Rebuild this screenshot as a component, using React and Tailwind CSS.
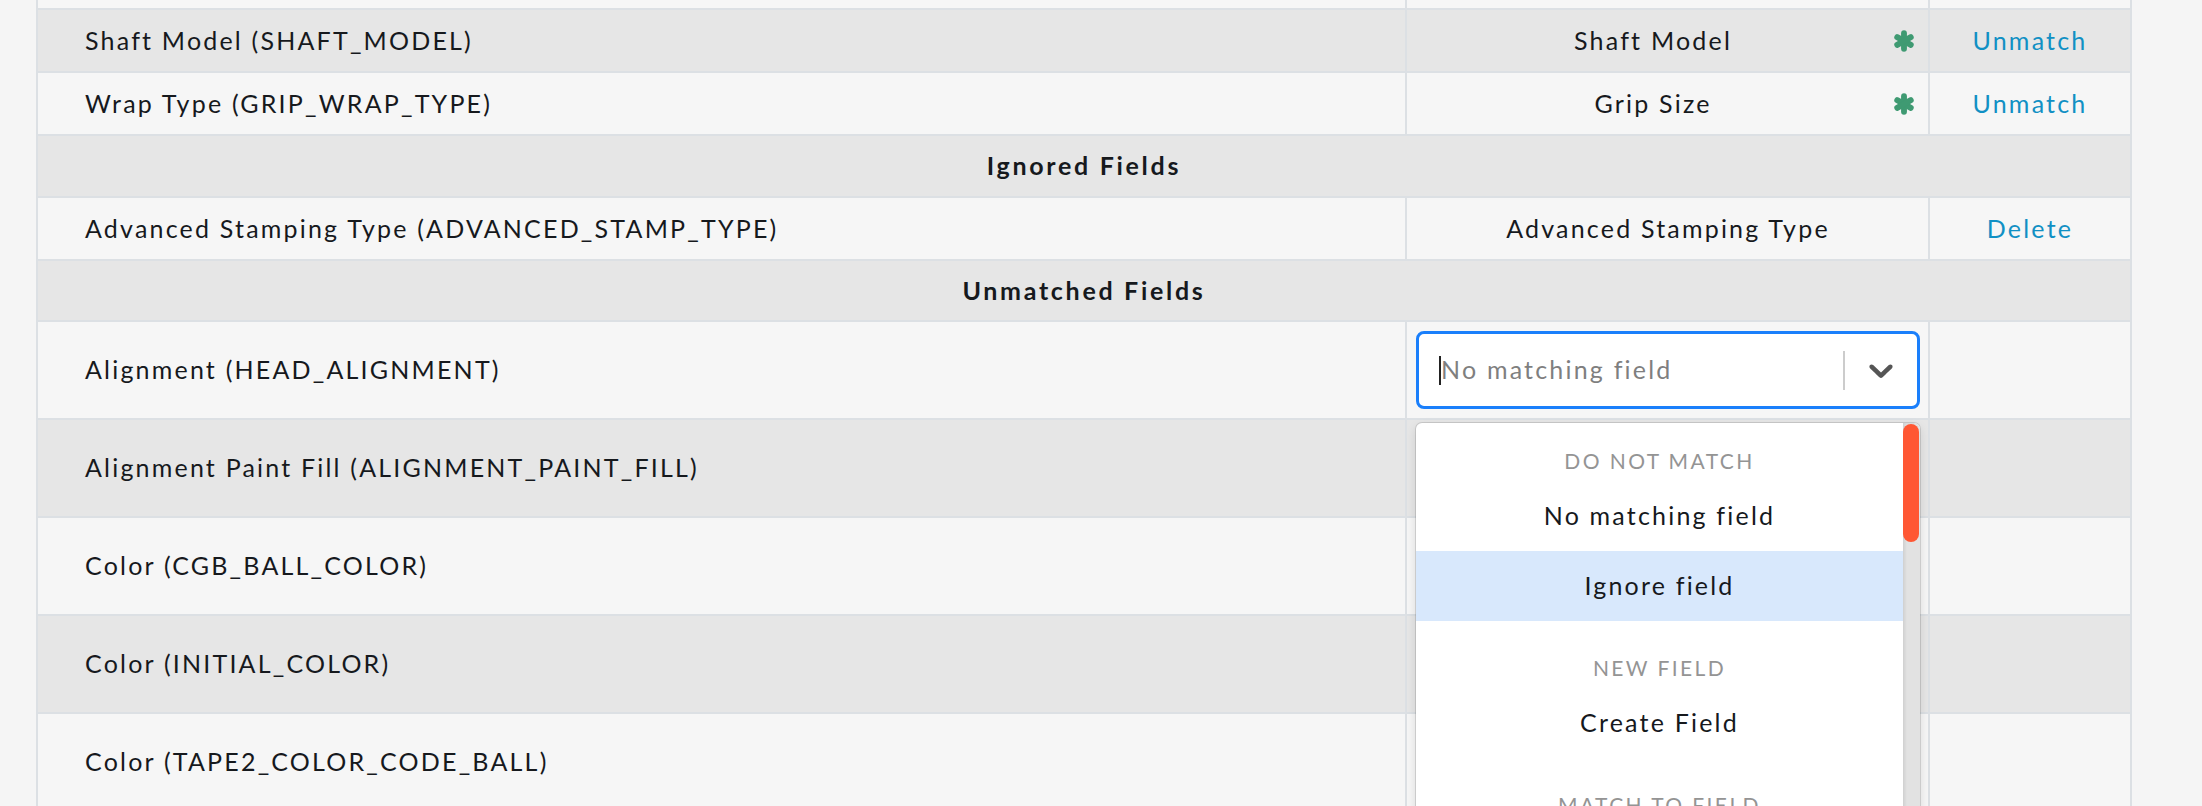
import React from "react";

const rows = [
  { kind: "field", name: "Shaft Model (SHAFT_MODEL)", match: "Shaft Model", star: true, action: "Unmatch", h: "h-[63px]", dark: true },
  { kind: "field", name: "Wrap Type (GRIP_WRAP_TYPE)", match: "Grip Size", star: true, action: "Unmatch", h: "h-[63px]", dark: false },
  { kind: "section", label: "Ignored Fields", h: "h-[62px]", dark: true },
  { kind: "field", name: "Advanced Stamping Type (ADVANCED_STAMP_TYPE)", match: "Advanced Stamping Type", star: false, action: "Delete", h: "h-[63px]", dark: false },
  { kind: "section", label: "Unmatched Fields", h: "h-[61px]", dark: true },
  { kind: "select", name: "Alignment (HEAD_ALIGNMENT)", open: true, dark: false },
  { kind: "select", name: "Alignment Paint Fill (ALIGNMENT_PAINT_FILL)", dark: true },
  { kind: "select", name: "Color (CGB_BALL_COLOR)", dark: false },
  { kind: "select", name: "Color (INITIAL_COLOR)", dark: true },
  { kind: "select", name: "Color (TAPE2_COLOR_CODE_BALL)", dark: false },
];

function Asterisk() {
  return (
    <svg width="22" height="22" viewBox="0 0 24 24" className="shrink-0">
      <g stroke="#3f9a72" strokeWidth="6.4" strokeLinecap="round">
        <line x1="12" y1="3.5" x2="12" y2="20.5" />
        <line x1="4.6" y1="7.75" x2="19.4" y2="16.25" />
        <line x1="4.6" y1="16.25" x2="19.4" y2="7.75" />
      </g>
    </svg>
  );
}

function Chevron() {
  return (
    <svg width="40" height="40" viewBox="0 0 20 20" fill="#555">
      <path d="M4.516 7.548c0.436-0.446 1.043-0.481 1.576 0l3.908 3.747 3.908-3.747c0.533-0.481 1.141-0.446 1.574 0 0.436 0.445 0.408 1.197 0 1.615-0.406 0.418-4.695 4.502-4.695 4.502-0.217 0.223-0.502 0.335-0.787 0.335s-0.57-0.112-0.789-0.335c0 0-4.287-4.084-4.695-4.502s-0.436-1.17 0-1.615z" />
    </svg>
  );
}

function Menu() {
  return (
    <div className="absolute left-0 right-0 top-full mt-[14px] z-10 h-[520px] overflow-hidden rounded-[6px] bg-white shadow-[0_0_0_1px_rgba(0,0,0,0.12),0_4px_11px_rgba(0,0,0,0.12)]">
      <div className="mr-[17px] py-[4px] text-center">
        <div className="py-[13px]">
          <div className="h-[41px] flex items-center justify-center text-[21px] tracking-[2.4px] text-[#949494]">DO NOT MATCH</div>
          <div className="h-[70px] flex items-center justify-center text-[#16191d]">No matching field</div>
          <div className="h-[70px] flex items-center justify-center bg-[#d8e8fc] text-[#16191d]">Ignore field</div>
        </div>
        <div className="py-[13px]">
          <div className="h-[41px] flex items-center justify-center text-[21px] tracking-[2.4px] text-[#949494]">NEW FIELD</div>
          <div className="h-[70px] flex items-center justify-center text-[#16191d]">Create Field</div>
        </div>
        <div className="py-[13px]">
          <div className="h-[41px] flex items-center justify-center text-[21px] tracking-[2.4px] text-[#949494]">MATCH TO FIELD</div>
        </div>
      </div>
      {/* scrollbar */}
      <div className="absolute right-0 top-0 bottom-0 w-[17px] bg-[#e2e2e2] shadow-[inset_2px_0_3px_rgba(0,0,0,0.08)]">
        <div className="mt-[1px] h-[118px] w-[16px] rounded-full bg-[#ff5733]" />
      </div>
    </div>
  );
}

function Select({ open }) {
  return (
    <div className="relative w-full">
      <div className={`h-[78px] flex items-center rounded-[8px] bg-white border-[3px] ${open ? "border-[#1a7ffb]" : "border-[#cccccc]"}`}>
        <div className="flex-1 flex items-center pl-[20px]">
          {open && <span className="w-[2px] h-[29px] bg-[#222]" />}
          <span className="text-[#7f7f7f]">No matching field</span>
        </div>
        <span className="w-[2px] h-[39px] bg-[#cccccc]" />
        <div className="w-[72px] flex items-center justify-center">
          <Chevron />
        </div>
      </div>
      {open && <Menu />}
    </div>
  );
}

function Row({ row }) {
  const bg = row.dark ? "bg-[#e6e6e6]" : "bg-[#f6f6f6]";
  if (row.kind === "section") {
    return (
      <div className={`${row.h} ${bg} border-b-2 border-[#dce0e4] flex items-center justify-center font-bold tracking-[2.7px] text-[#16191d]`}>
        {row.label}
      </div>
    );
  }
  if (row.kind === "select") {
    return (
      <div className={`h-[98px] ${bg} border-b-2 border-[#dce0e4] flex`}>
        <div className="w-[1369px] border-r-2 border-[#dce0e4] flex items-center pl-[47px] text-[#16191d]">{row.name}</div>
        <div className="w-[523px] border-r-2 border-[#dce0e4] flex items-center pl-[9px] pr-[8px]">
          {row.open && <Select open />}
        </div>
        <div className="flex-1" />
      </div>
    );
  }
  return (
    <div className={`${row.h} ${bg} border-b-2 border-[#dce0e4] flex`}>
      <div className="w-[1369px] border-r-2 border-[#dce0e4] flex items-center pl-[47px] text-[#16191d]">{row.name}</div>
      <div className="w-[523px] border-r-2 border-[#dce0e4] flex items-center pl-[14px] pr-[13px]">
        <span className="flex-1 text-center text-[#16191d]">{row.match}</span>
        {row.star && <span className="ml-[8px]"><Asterisk /></span>}
      </div>
      <div className="flex-1 flex items-center justify-center">
        <a className="text-[#1190c4] cursor-pointer">{row.action}</a>
      </div>
    </div>
  );
}

export default function App() {
  return (
    <div className="h-[806px] w-full overflow-hidden bg-[#f5f5f5] font-['Lato','Liberation_Sans',sans-serif] text-[25px] tracking-[2.2px]">
      <div className="ml-[36px] w-[2096px] border-x-2 border-[#dce0e4]">
        {/* tail of the row above */}
        <div className="h-[10px] bg-[#f6f6f6] border-b-2 border-[#dce0e4] flex">
          <div className="w-[1369px] border-r-2 border-[#dce0e4]" />
          <div className="w-[523px] border-r-2 border-[#dce0e4]" />
          <div className="flex-1" />
        </div>
        {rows.map((row, i) => (
          <Row key={i} row={row} />
        ))}
      </div>
    </div>
  );
}
